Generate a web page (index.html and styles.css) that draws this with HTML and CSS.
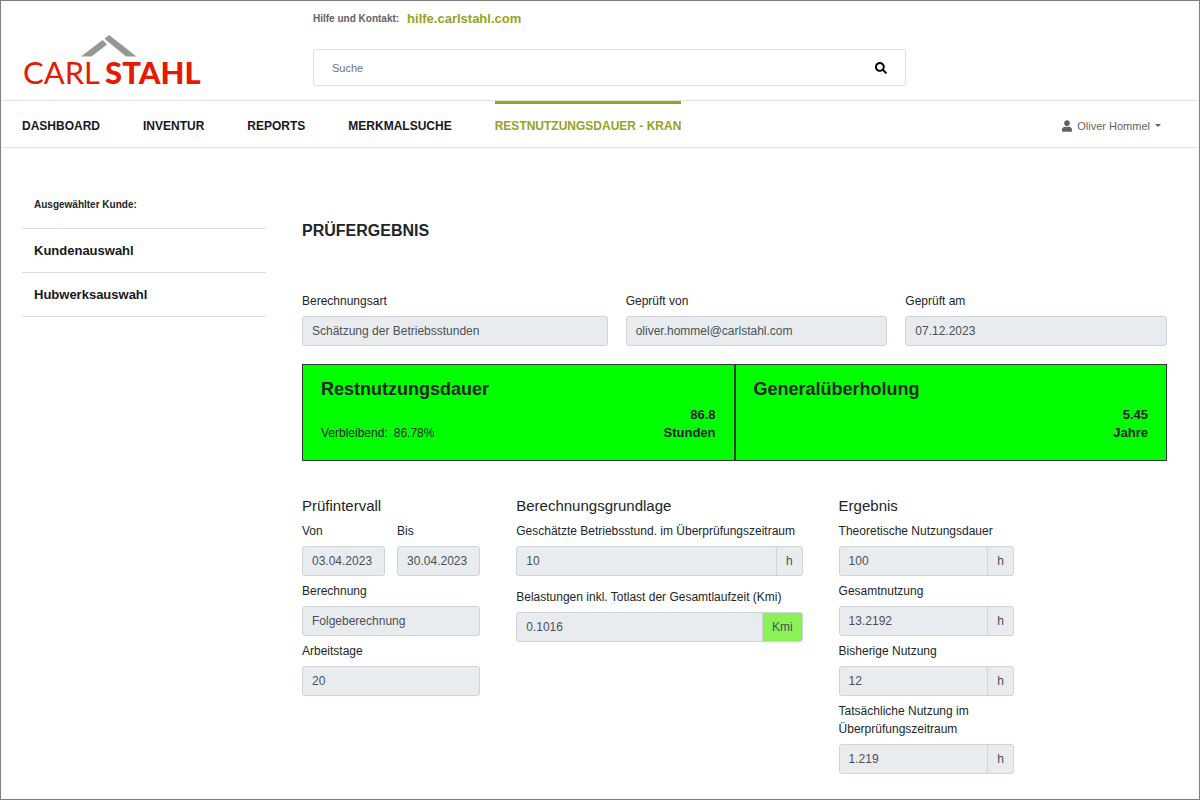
FILE: index.html
```html
<!DOCTYPE html>
<html lang="de">
<head>
<meta charset="utf-8">
<meta name="viewport" content="width=device-width, initial-scale=1">
<title>Restnutzungsdauer - Kran</title>
<link rel="stylesheet" href="styles.css">
</head>
<body>
<div class="page">
  <header class="header">
    <a class="logo" href="#" aria-label="Carl Stahl">
      <svg class="logo-roof" viewBox="0 0 56 22" aria-hidden="true">
        <path d="M0 21.500 21.500 5 26 9.500 10.500 21.500Z"/>
        <path d="M23.500 3.800 28 0 55.500 21.500H45Z"/>
      </svg>
      <span class="logo-name"><span class="logo-light">CARL</span><span class="logo-bold">STAHL</span></span>
    </a>
    <div class="header-main">
      <p class="help">Hilfe und Kontakt: <a class="help-link" href="#">hilfe.carlstahl.com</a></p>
      <form class="search" role="search">
        <input class="search-input" type="search" placeholder="Suche" aria-label="Suche">
        <button class="search-button" type="button" aria-label="Suchen">
          <svg viewBox="0 0 512 512" width="12" height="12" aria-hidden="true"><path d="M505 442.700 405.300 343c-4.500-4.500-10.600-7-17-7H372c27.600-35.300 44-79.700 44-128C416 93.100 322.900 0 208 0S0 93.100 0 208s93.100 208 208 208c48.300 0 92.700-16.400 128-44v16.300c0 6.400 2.500 12.500 7 17l99.700 99.700c9.400 9.400 24.600 9.400 33.900 0l28.300-28.300c9.400-9.400 9.400-24.600.1-34zM208 336c-70.700 0-128-57.200-128-128 0-70.700 57.200-128 128-128 70.700 0 128 57.200 128 128 0 70.700-57.200 128-128 128z"/></svg>
        </button>
      </form>
    </div>
  </header>

  <nav class="nav" aria-label="Hauptmenü">
    <a class="nav-link" href="#">DASHBOARD</a>
    <a class="nav-link" href="#">INVENTUR</a>
    <a class="nav-link" href="#">REPORTS</a>
    <a class="nav-link" href="#">MERKMALSUCHE</a>
    <a class="nav-link nav-link-active" href="#" aria-current="page">RESTNUTZUNGSDAUER - KRAN</a>
    <button class="user" type="button" aria-haspopup="true">
      <svg viewBox="0 0 448 512" width="10" height="12" aria-hidden="true"><path d="M224 256c70.700 0 128-57.300 128-128S294.700 0 224 0 96 57.300 96 128s57.300 128 128 128zm89.600 32h-16.700c-22.200 10.200-46.900 16-72.900 16s-50.600-5.800-72.900-16h-16.700C60.200 288 0 348.200 0 422.400V464c0 26.500 21.500 48 48 48h352c26.500 0 48-21.500 48-48v-41.600c0-74.200-60.200-134.400-134.400-134.400z"/></svg>
      <span>Oliver Hommel</span>
      <span class="caret"></span>
    </button>
  </nav>

  <div class="body">
    <aside class="sidebar">
      <p class="sidebar-title">Ausgewählter Kunde:</p>
      <a class="sidebar-link" href="#">Kundenauswahl</a>
      <a class="sidebar-link" href="#">Hubwerksauswahl</a>
    </aside>

    <main class="content">
      <h1 class="title">PRÜFERGEBNIS</h1>

      <div class="summary">
        <div class="field"><label for="art">Berechnungsart</label><input class="input" id="art" readonly value="Schätzung der Betriebsstunden"></div>
        <div class="field"><label for="von-wem">Geprüft von</label><input class="input" id="von-wem" readonly value="oliver.hommel@carlstahl.com"></div>
        <div class="field"><label for="am">Geprüft am</label><input class="input" id="am" readonly value="07.12.2023"></div>
      </div>

      <div class="results">
        <section class="result">
          <h2 class="result-title">Restnutzungsdauer</h2>
          <div class="result-row">
            <p class="result-note"><span>Verbleibend:</span><span>86.78%</span></p>
            <p class="result-value">86.8<br>Stunden</p>
          </div>
        </section>
        <section class="result">
          <h2 class="result-title">Generalüberholung</h2>
          <div class="result-row">
            <p class="result-value">5.45<br>Jahre</p>
          </div>
        </section>
      </div>

      <div class="details">
        <section class="group">
          <h2 class="group-title">Prüfintervall</h2>
          <div class="pair">
            <div class="field"><label for="von">Von</label><input class="input" id="von" readonly value="03.04.2023"></div>
            <div class="field"><label for="bis">Bis</label><input class="input" id="bis" readonly value="30.04.2023"></div>
          </div>
          <div class="field"><label for="berechnung">Berechnung</label><input class="input" id="berechnung" readonly value="Folgeberechnung"></div>
          <div class="field"><label for="tage">Arbeitstage</label><input class="input" id="tage" readonly value="20"></div>
        </section>

        <section class="group group-wide">
          <h2 class="group-title">Berechnungsgrundlage</h2>
          <div class="field"><label for="stunden">Geschätzte Betriebsstund. im Überprüfungszeitraum</label>
            <div class="input-group"><input class="input" id="stunden" readonly value="10"><span class="unit">h</span></div></div>
          <div class="field"><label for="kmi">Belastungen inkl. Totlast der Gesamtlaufzeit (Kmi)</label>
            <div class="input-group"><input class="input" id="kmi" readonly value="0.1016"><span class="unit unit-ok">Kmi</span></div></div>
        </section>

        <section class="group">
          <h2 class="group-title">Ergebnis</h2>
          <div class="field"><label for="theoretisch">Theoretische Nutzungsdauer</label>
            <div class="input-group"><input class="input" id="theoretisch" readonly value="100"><span class="unit">h</span></div></div>
          <div class="field"><label for="gesamt">Gesamtnutzung</label>
            <div class="input-group"><input class="input" id="gesamt" readonly value="13.2192"><span class="unit">h</span></div></div>
          <div class="field"><label for="bisher">Bisherige Nutzung</label>
            <div class="input-group"><input class="input" id="bisher" readonly value="12"><span class="unit">h</span></div></div>
          <div class="field"><label for="real">Tatsächliche Nutzung im Überprüfungszeitraum</label>
            <div class="input-group"><input class="input" id="real" readonly value="1.219"><span class="unit">h</span></div></div>
        </section>
      </div>
    </main>
  </div>
</div>
</body>
</html>
```
FILE: styles.css
```css
* { box-sizing: border-box; }

body {
  margin: 0;
  font: 12px/18px "Liberation Sans", Arial, sans-serif;
  color: #212529;
  background: #fff;
}

h1, h2, p { margin: 0; }
a { color: inherit; text-decoration: none; }
input, button { font: inherit; }

.page {
  min-height: 100vh;
  border: 1px solid #808080;
}

/* Header */
.header {
  display: flex;
  padding: 8px 21px 13px;
  border-bottom: 1px solid #e3e3e3;
}

.logo {
  display: flex;
  flex: 0 0 291px;
  flex-direction: column;
  padding-top: 26px;
}

.logo-roof {
  width: 56px;
  height: 22px;
  margin-left: 59px;
  fill: #969790;
}

.logo-name {
  display: flex;
  gap: 5px;
  padding-left: 1px;
  font: 31px/30px Lato, sans-serif;
  color: #e41b00;
}

.logo-bold { font-weight: 900; }

.header-main {
  flex: 0 1 593px;
  padding-top: 1px;
}

.help {
  display: flex;
  align-items: center;
  gap: 8px;
  margin-bottom: 21px;
  font-size: 10px;
  font-weight: 700;
  color: #5f6368;
}

.help-link {
  font-size: 13px;
  color: #95a322;
}

.search {
  display: flex;
  height: 37px;
  border: 1px solid #e1e1e1;
  border-radius: 2px;
}

.search-input {
  flex: 1;
  min-width: 0;
  padding: 0 18px;
  font-size: 11px;
  border: 0;
  background: none;
}

.search-input::placeholder { color: #6c757d; }

.search-button {
  display: flex;
  align-items: center;
  padding: 0 18px;
  border: 0;
  background: none;
}

/* Main menu */
.nav {
  display: flex;
  gap: 43px;
  padding: 0 38px 0 21px;
  font-weight: 700;
  border-bottom: 1px solid #e3e3e3;
}

.nav-link {
  padding: 13px 0 12px;
  border-top: 3px solid transparent;
  color: #17171f;
  line-height: 18px;
}

.nav-link-active {
  border-top-color: #95a322;
  color: #95a322;
}

.user {
  display: flex;
  align-items: center;
  gap: 5px;
  margin-left: auto;
  padding: 3px 0 0;
  border: 0;
  font-size: 11px;
  font-weight: 400;
  color: #5f6265;
  fill: #5f6265;
  background: none;
}

.caret {
  border: 3px solid transparent;
  border-top-color: currentColor;
  border-bottom: 0;
}

/* Page body */
.body {
  display: flex;
  gap: 36px;
  padding: 47px 32px 20px 21px;
}

.sidebar { flex: 0 0 244px; }

.sidebar-title {
  padding: 1px 12px 14px;
  font-size: 10px;
  font-weight: 700;
}

.sidebar-link {
  display: block;
  padding: 13px 12px 12px;
  border-top: 1px solid #e0e0e0;
  font-size: 13px;
  font-weight: 700;
  color: #17171f;
}

.sidebar-link:last-child { border-bottom: 1px solid #e0e0e0; }

.content {
  flex: 1;
  min-width: 0;
  padding-top: 24px;
}

.title {
  margin-bottom: 49px;
  font-size: 16px;
  line-height: 24px;
}

.field {
  display: flex;
  flex-direction: column;
  gap: 6px;
  min-width: 0;
}

.input {
  width: 100%;
  min-width: 0;
  height: 30px;
  padding: 0 9px;
  border: 1px solid #ced4da;
  border-radius: 3px;
  color: #495057;
  background: #e9ecef;
}

.input-group { display: flex; }

.input-group .input {
  flex: 1;
  border-radius: 3px 0 0 3px;
}

.unit {
  margin-left: -1px;
  padding: 5px 9px;
  border: 1px solid #ced4da;
  border-radius: 0 3px 3px 0;
  color: #495057;
  background: #e9ecef;
}

.unit-ok { background: #8af256; }

.summary {
  display: grid;
  grid-template-columns: 306fr 262fr 262fr;
  gap: 18px;
  margin-bottom: 18px;
}

/* Result tiles */
.results {
  display: grid;
  grid-template-columns: 1fr 1fr;
  margin-bottom: 34px;
}

.result {
  padding: 12px 18px 18px;
  border: 1px solid #2c3c34;
  background: #0f0;
}

.result-title {
  margin-bottom: 5px;
  font-size: 18px;
  line-height: 24px;
}

.result-row {
  display: flex;
  align-items: flex-end;
}

.result-note {
  display: flex;
  gap: 6px;
}

.result-value {
  margin-left: auto;
  font-size: 13px;
  font-weight: 700;
  text-align: right;
}

/* Calculation details */
.details {
  display: grid;
  grid-template-columns: 178fr 286fr 175fr 117fr;
  column-gap: 36px;
}

.group {
  display: flex;
  flex-direction: column;
  gap: 6px;
}

.group-wide { gap: 12px; }

.group-title {
  font-size: 15px;
  font-weight: 400;
  line-height: 21px;
}

.group-wide .group-title { margin-bottom: -6px; }

.pair {
  display: grid;
  grid-template-columns: 1fr 1fr;
  gap: 12px;
}
```
